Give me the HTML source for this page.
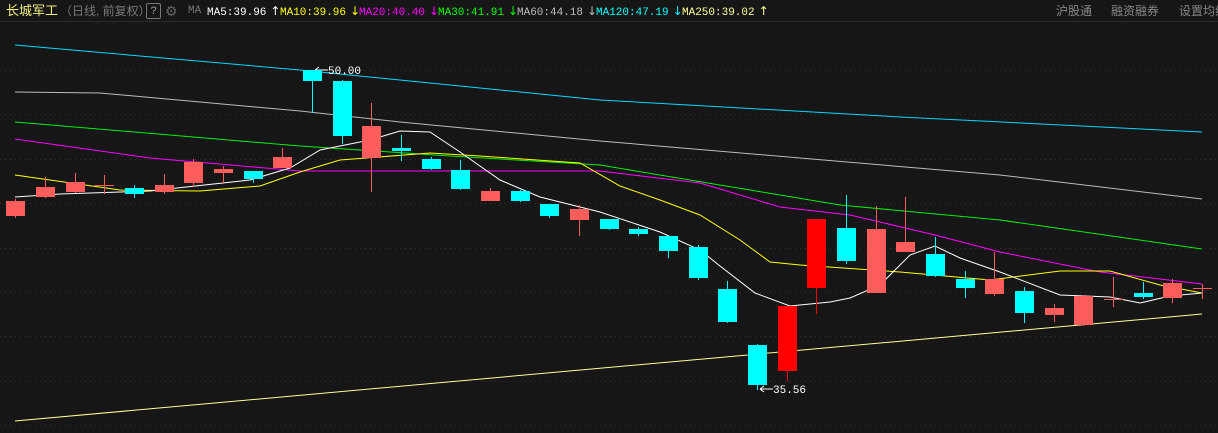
<!DOCTYPE html>
<html><head><meta charset="utf-8"><style>
body{margin:0;background:#161616;width:1218px;height:433px;overflow:hidden;font-family:"Liberation Sans","Noto Sans CJK SC",sans-serif}
.hd{position:absolute;left:0;top:0;width:1218px;height:21px;border-bottom:1px solid #2a2a2a;font-size:12px;line-height:22px;white-space:nowrap}
.m{font-family:"Liberation Mono","Noto Sans CJK SC",monospace;font-size:11px}
.a{font-family:"DejaVu Sans",sans-serif;font-size:12px;margin-left:4px}
</style></head><body>
<div class="hd">
<span style="position:absolute;left:6px;color:#f0f080;font-size:13px">长城军工</span>
<span style="position:absolute;left:60px;color:#777">（日线, 前复权）</span>
<span style="position:absolute;left:146px;top:3px;width:13px;height:14px;border:1px solid #777;color:#999;font-size:11px;line-height:14px;text-align:center;border-radius:2px">?</span>
<span style="position:absolute;left:165px;color:#666;font-size:14px">⚙</span>
<span class="m" style="position:absolute;left:188px;color:#777">MA</span>
<span class="m" style="position:absolute;left:207px;color:#fff">MA5:39.96<span class="a">↑</span></span>
<span class="m" style="position:absolute;left:280px;color:#ff0">MA10:39.96<span class="a">↓</span></span>
<span class="m" style="position:absolute;left:359px;color:#f0f">MA20:40.40<span class="a">↓</span></span>
<span class="m" style="position:absolute;left:438px;color:#0f0">MA30:41.91<span class="a">↓</span></span>
<span class="m" style="position:absolute;left:517px;color:#bbb">MA60:44.18<span class="a">↓</span></span>
<span class="m" style="position:absolute;left:596px;color:#0ff">MA120:47.19<span class="a">↓</span></span>
<span class="m" style="position:absolute;left:682px;color:#ffff99">MA250:39.02<span class="a">↑</span></span>
<span style="position:absolute;left:1056px;color:#888">沪股通</span>
<span style="position:absolute;left:1111px;color:#888">融资融券</span>
<span style="position:absolute;left:1179px;color:#888">设置均线</span>
</div>
<svg width="1218" height="433" style="position:absolute;left:0;top:0" shape-rendering="crispEdges">
<g stroke="#333" stroke-dasharray="1,4">
<line x1="0" x2="1218" y1="70.5" y2="70.5"/><line x1="0" x2="1218" y1="114.5" y2="114.5"/><line x1="0" x2="1218" y1="159.5" y2="159.5"/><line x1="0" x2="1218" y1="203.5" y2="203.5"/><line x1="0" x2="1218" y1="248.5" y2="248.5"/><line x1="0" x2="1218" y1="292.5" y2="292.5"/><line x1="0" x2="1218" y1="336.5" y2="336.5"/><line x1="0" x2="1218" y1="381.5" y2="381.5"/><line x1="0" x2="1218" y1="425.5" y2="425.5"/>
</g>
<g fill="none" stroke-width="1" shape-rendering="auto">
<polyline stroke="#ffff99" points="15,421 1202,314"/>
<polyline stroke="#00d8ff" points="15,45 300,70 600,100 900,117 1202,132"/>
<polyline stroke="#bbb" points="15,92 100,93 300,111 400,122 600,141 800,158 1000,175 1202,199"/>
<polyline stroke="#00ee00" points="15,122 300,146 450,156 600,165 750,190 840,205 1000,220 1202,249"/>
<polyline stroke="#ff00ff" points="15,139 150,158 300,171 600,171 700,183 780,207 850,215 935,235 1000,252 1100,272 1202,284"/>
<polyline stroke="#ffff00" points="15,175 120,190 200,191 260,186 300,172 340,160 430,153 480,156 580,163 620,186 660,200 700,215 740,240 770,262 800,265 900,272 990,280 1060,271 1110,271 1160,285 1202,293"/>
<polyline stroke="#fff" points="15,197 60,194 150,191 250,180 290,168 320,150 370,140 400,131 430,132 460,152 500,180 540,197 600,212 660,232 700,250 720,266 755,293 790,306 830,302 850,298 880,285 910,255 935,246 960,258 1000,272 1060,295 1110,297 1140,303 1170,296 1202,293"/>
<path stroke="#fff" d="M315,70 H328 M315,70 l4,-3 M315,70 l4,3 M760,389 H773 M760,389 l4,-3 M760,389 l4,3"/>
</g>
<g id="c"></g>
<g fill="#fff" font-family="Liberation Mono,monospace" font-size="11" shape-rendering="auto">
<text x="328" y="74">50.00</text>
<text x="773" y="393">35.56</text>
</g>
</svg>
<script>
var d=[[15,201,216,199,218,'s'],[45,187,197,177,198,'s'],[75,182,192,173,193,'s'],[104,185,186,175,194,'s'],[134,188,194,185,198,'c'],[164,185,192,174,194,'s'],[193,162,183,159,187,'s'],[223,169,173,166,184,'s'],[253,171,179,171,183,'c'],[282,157,168,148,168,'s'],[312,70,81,70,113,'c'],[342,81,136,80,144,'c'],[371,126,158,103,192,'s'],[401,148,151,135,161,'c'],[431,159,169,157,170,'c'],[460,170,189,160,190,'c'],[490,191,201,188,201,'s'],[520,191,201,190,202,'c'],[549,204,216,204,218,'c'],[579,209,220,205,236,'s'],[609,219,229,219,230,'c'],[638,229,234,227,236,'c'],[668,236,251,236,258,'c'],[698,247,278,245,280,'c'],[727,289,322,281,323,'c'],[757,345,385,344,390,'c'],[787,306,371,306,381,'r'],[816,219,288,219,314,'r'],[846,228,261,195,264,'c'],[876,229,293,206,293,'s'],[905,242,252,197,252,'s'],[935,254,276,237,277,'c'],[965,279,288,271,298,'c'],[994,279,294,252,296,'s'],[1024,291,313,287,323,'c'],[1054,308,315,304,322,'s'],[1083,296,325,295,326,'s'],[1113,299,300,277,307,'s'],[1143,293,297,282,299,'c'],[1172,283,298,279,303,'s'],[1202,288,289,284,299,'s']];
var col={s:'#ff5c5c',c:'#00ffff',r:'#ff0000'},h='';
d.forEach(function(a){var c=col[a[5]];h+='<rect x="'+a[0]+'" y="'+a[3]+'" width="1" height="'+(a[4]-a[3])+'" fill="'+c+'"/>';h+='<rect x="'+(a[0]-9)+'" y="'+a[1]+'" width="19" height="'+Math.max(1,a[2]-a[1])+'" fill="'+c+'"/>';});
document.getElementById('c').innerHTML=h;
</script>
</body></html>
